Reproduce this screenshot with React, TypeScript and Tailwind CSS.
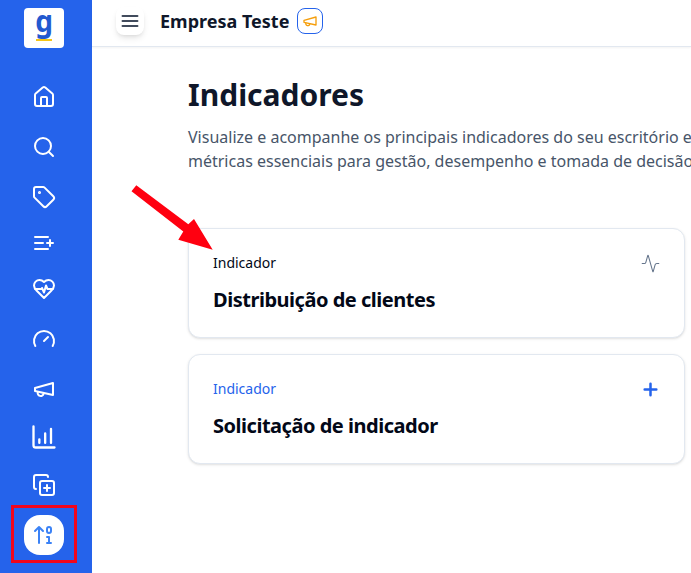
import type { ReactNode } from "react";

type IconProps = { children: ReactNode; className?: string; weight?: number };

function Icon({ children, className = "size-6", weight = 2 }: IconProps) {
  return (
    <svg viewBox="0 0 24 24" fill="none" stroke="currentColor" strokeWidth={weight} strokeLinecap="round" strokeLinejoin="round" className={`block shrink-0 ${className}`}>
      {children}
    </svg>
  );
}

const megaphone = (
  <>
    <path d="m3 11 18-5v12L3 14v-3z" />
    <path d="M11.6 16.8a3 3 0 1 1-5.8-1.6" />
  </>
);

function Sidebar() {
  return (
    <aside className="flex w-[92px] shrink-0 flex-col items-center bg-[#2563eb] pt-2 pr-1 text-white">
      <div className="flex size-10 flex-col items-center rounded bg-white">
        <span className="h-[31px] scale-y-108 text-[28px] leading-[24px] font-bold text-[#2359cf]">g</span>
        <span className="h-[2px] w-4 bg-[#f5c518]" />
      </div>
      <nav className="flex flex-col items-center pt-[37px]">
        <Icon>
          <path d="M15 21v-8a1 1 0 0 0-1-1h-4a1 1 0 0 0-1 1v8" />
          <path d="M3 10a2 2 0 0 1 .709-1.528l7-5.999a2 2 0 0 1 2.582 0l7 5.999A2 2 0 0 1 21 10v9a2 2 0 0 1-2 2H5a2 2 0 0 1-2-2z" />
        </Icon>
        <Icon className="mt-[26px] size-6">
          <circle cx="11" cy="11" r="8" />
          <path d="m21 21-4.3-4.3" />
        </Icon>
        <Icon className="mt-[26px] size-6">
          <path d="M12.586 2.586A2 2 0 0 0 11.172 2H4a2 2 0 0 0-2 2v7.172a2 2 0 0 0 .586 1.414l8.704 8.704a2.426 2.426 0 0 0 3.42 0l6.58-6.58a2.426 2.426 0 0 0 0-3.42z" />
          <circle cx="7.5" cy="7.5" r=".5" fill="currentColor" />
        </Icon>
        <Icon className="mt-[22px] size-6">
          <path d="M11 12H3M16 6H3M16 18H3M18 9v6M21 12h-6" />
        </Icon>
        <Icon className="mt-[22px] size-6">
          <path d="M19 14c1.49-1.46 3-3.21 3-5.5A5.5 5.5 0 0 0 16.5 3c-1.76 0-3 .5-4.5 2-1.5-1.5-2.74-2-4.5-2A5.5 5.5 0 0 0 2 8.5c0 2.3 1.5 4.05 3 5.5l7 7Z" />
          <path d="M3.22 12H9.5l.5-1 2 4.5 2-7 1.5 3.5h5.27" />
        </Icon>
        <Icon className="mt-[26px] size-6">
          <path d="m12 14 4-4" />
          <path d="M3.34 19a10 10 0 1 1 17.32 0" />
        </Icon>
        <Icon className="mt-[26px] size-6">{megaphone}</Icon>
        <Icon className="mt-[22px] size-7">
          <path d="M3 3v16a2 2 0 0 0 2 2h16M13 17V9M18 17V5M8 17v-3" />
        </Icon>
        <Icon className="mt-[22px] size-6">
          <path d="M15 12v6M12 15h6" />
          <rect width="14" height="14" x="8" y="8" rx="2" />
          <path d="M4 16c-1.1 0-2-.9-2-2V4c0-1.1.9-2 2-2h10c1.1 0 2 .9 2 2" />
        </Icon>
        <div className="mt-[7.5px] flex h-[58px] w-[66px] items-center justify-center border-[3px] border-[#f0061c] pt-[2px]">
          <div className="flex size-10 items-center justify-center rounded-2xl bg-white text-[#3b82f6]">
            <Icon>
              <path d="m3 8 4-4 4 4M7 4v16" />
              <rect x="15" y="4" width="4" height="6" ry="2" />
              <path d="M17 20v-6h-2M15 20h4" />
            </Icon>
          </div>
        </div>
      </nav>
    </aside>
  );
}

function Card({ label, labelClass, title, icon }: { label: string; labelClass: string; title: string; icon: ReactNode }) {
  return (
    <article className="h-[110px] w-[497px] rounded-xl border border-[#e2e8f0] bg-white px-6 pt-6 shadow-sm">
      <div className="flex h-5 items-center justify-between">
        <span className={`text-sm ${labelClass}`}>{label}</span>
        {icon}
      </div>
      <h2 className="mt-[13px] text-xl leading-7 font-bold tracking-[-0.48px] text-[#020817]">{title}</h2>
    </article>
  );
}

export default function App() {
  return (
    <div className="relative flex h-[573px] w-[691px] overflow-hidden bg-white font-['Noto_Sans',sans-serif]">
      <Sidebar />
      <div className="flex min-w-0 flex-1 flex-col">
        <header className="flex h-[47px] shrink-0 items-center border-b border-[#e2e8f0] pb-1 pl-6 shadow-[0_1px_2px_rgba(0,0,0,0.05)]">
          <button className="flex size-7 items-center justify-center rounded-lg bg-white text-[#414b5c] shadow-md">
            <Icon className="size-5" weight={2.3}>
              <path d="M3 6h18M3 12h18M3 18h18" />
            </Icon>
          </button>
          <span className="ml-4 text-lg leading-7 font-bold whitespace-nowrap text-[#0f172a]">Empresa Teste</span>
          <span className="ml-2 flex size-[26px] items-center justify-center rounded-lg border border-[#2563eb] text-[#f59e0b]">
            <Icon className="size-4">{megaphone}</Icon>
          </span>
        </header>
        <main className="pt-[30px] pl-24">
          <h1 className="text-3xl leading-9 font-bold text-[#0f172a]">Indicadores</h1>
          <p className="mt-3 text-base leading-6 whitespace-nowrap text-[#475569]">
            Visualize e acompanhe os principais indicadores do seu escritório e
            <br />
            métricas essenciais para gestão, desempenho e tomada de decisão
          </p>
          <section className="mt-[55px] flex flex-col gap-4">
            <Card
              label="Indicador"
              labelClass="text-[#020817]"
              title="Distribuição de clientes"
              icon={
                <Icon className="size-5 text-[#64748b]" weight={1.25}>
                  <path
                    transform="translate(.6 .6)"
                    d="M22 12h-2.48a2 2 0 0 0-1.93 1.46l-2.35 8.36a.25.25 0 0 1-.48 0L9.24 2.18a.25.25 0 0 0-.48 0l-2.35 8.36A2 2 0 0 1 4.49 12H2"
                  />
                </Icon>
              }
            />
            <Card
              label="Indicador"
              labelClass="text-[#2563eb]"
              title="Solicitação de indicador"
              icon={
                <Icon className="size-5 text-[#2563eb]" weight={3}>
                  <path transform="translate(.6 .6)" d="M5 12h14M12 5v14" />
                </Icon>
              }
            />
          </section>
        </main>
      </div>
      <svg viewBox="0 0 84 66" className="absolute top-[184px] left-[130px] h-[66px] w-[84px]" fill="#ff0010">
        <path d="M6.3 1.3 58.3 40.3 64 35 82.7 65.7 48.3 55.7 53.3 47.5 1.5 7.2Z" />
      </svg>
    </div>
  );
}
